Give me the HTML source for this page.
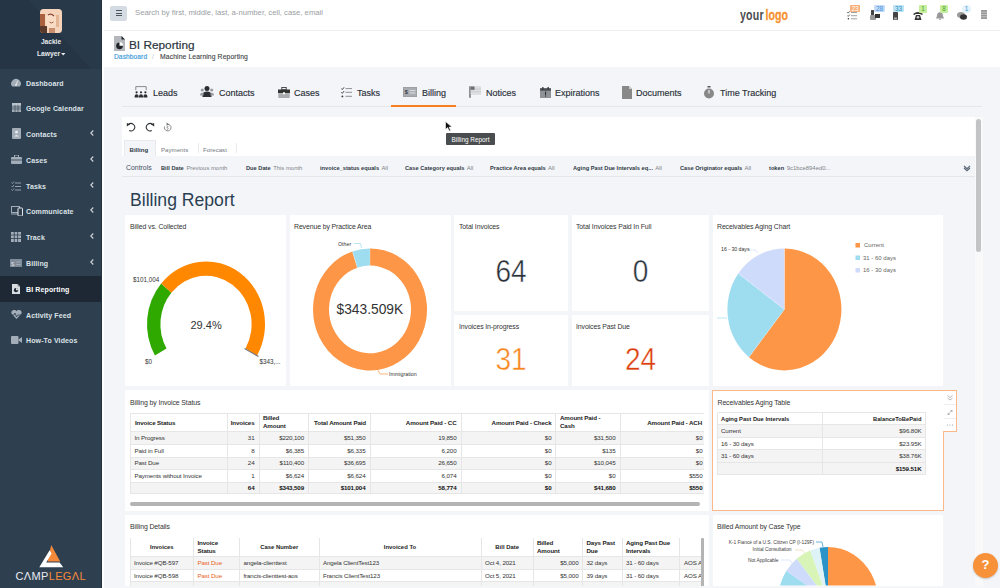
<!DOCTYPE html>
<html><head><meta charset="utf-8">
<style>
*{margin:0;padding:0;box-sizing:border-box}
html,body{width:1000px;height:588px;overflow:hidden;background:#f4f5f9;font-family:"Liberation Sans",sans-serif}
.a{position:absolute}
#sb{left:0;top:0;width:102px;height:588px;background:#2e3f50}
#sbh{left:0;top:0;width:102px;height:69px;background:#253545}
.mi{position:absolute;left:26px;color:#dde2e6;font-size:7px;font-weight:bold;letter-spacing:0.12px;white-space:nowrap;line-height:10px}
.chev{position:absolute;left:89px;color:#c8ced4;font-size:9px;font-weight:bold;line-height:10px}
.tab{position:absolute;top:88px;font-size:9px;color:#2a3038;-webkit-text-stroke:0.15px #2a3038;white-space:nowrap;line-height:11px}
.t{position:absolute;white-space:nowrap;line-height:1.15}
.card{position:absolute;background:#fff}
</style></head><body>
<!-- SIDEBAR -->
<div id="sb" class="a"></div>
<div id="sbh" class="a"></div>
<svg class="a" style="left:0;top:0" width="102" height="69"><path d="M29 0H102V69H91Z" fill="#283949"/></svg>
<div class="a" style="left:0;top:276px;width:102px;height:26px;background:#1d2834"></div>
<div class="a" style="left:102px;top:0;width:2px;height:588px;background:#fff"></div>
<div class="a" style="left:101px;top:0;width:1px;height:588px;background:#24323f"></div>
<!-- avatar -->
<svg class="a" style="left:40px;top:9px" width="22" height="24" viewBox="0 0 22 24"><defs><clipPath id="av"><rect width="22" height="24" rx="3.5"/></clipPath></defs><g clip-path="url(#av)">
<rect width="22" height="24" fill="#f4d3ba"/>
<rect x="0" y="5" width="5" height="19" fill="#a8603f"/>
<rect x="0" y="17" width="7" height="7" fill="#5a3a2c"/>
<ellipse cx="11" cy="12" rx="5.5" ry="8" fill="#f8dcc6"/>
<path d="M8 6 Q11 4 14 7" stroke="#8a4a34" stroke-width="1.3" fill="none"/>
<path d="M9.5 13 Q11.5 15 13.5 13" stroke="#9b5238" stroke-width="0.9" fill="none"/>
<rect x="16" y="6" width="3" height="12" fill="#e3b595"/>
<rect x="9" y="19" width="6" height="5" fill="#c98e6e"/>
</g></svg>
<div class="t" style="left:0;width:102px;text-align:center;top:38.3px;font-size:6.6px;font-weight:bold;color:#e8ebee">Jackie</div>
<div class="t" style="left:37px;top:50.3px;font-size:6.7px;font-weight:bold;color:#e8ebee">Lawyer</div><svg class="a" style="left:61.3px;top:53px" width="4.5" height="2.6" viewBox="0 0 5 3"><path d="M0 0h5L2.5 2.8z" fill="#e8ebee"/></svg>
<!-- menu -->
<div class="mi" style="top:79px">Dashboard</div>
<div class="mi" style="top:104px">Google Calendar</div>
<div class="mi" style="top:130px">Contacts</div>
<div class="mi" style="top:156px">Cases</div>
<div class="mi" style="top:182px">Tasks</div>
<div class="mi" style="top:207px">Communicate</div>
<div class="mi" style="top:233px">Track</div>
<div class="mi" style="top:259px">Billing</div>
<div class="mi" style="top:285px;color:#fff">BI Reporting</div>
<div class="mi" style="top:311px">Activity Feed</div>
<div class="mi" style="top:336px">How-To Videos</div>
<svg class="a" style="left:89.5px;top:130px" width="4" height="6" viewBox="0 0 4 6"><path d="M3.3 0.5L0.8 3l2.5 2.5" fill="none" stroke="#d0d5da" stroke-width="1.1"/></svg>
<svg class="a" style="left:89.5px;top:156px" width="4" height="6" viewBox="0 0 4 6"><path d="M3.3 0.5L0.8 3l2.5 2.5" fill="none" stroke="#d0d5da" stroke-width="1.1"/></svg>
<svg class="a" style="left:89.5px;top:182px" width="4" height="6" viewBox="0 0 4 6"><path d="M3.3 0.5L0.8 3l2.5 2.5" fill="none" stroke="#d0d5da" stroke-width="1.1"/></svg>
<svg class="a" style="left:89.5px;top:207px" width="4" height="6" viewBox="0 0 4 6"><path d="M3.3 0.5L0.8 3l2.5 2.5" fill="none" stroke="#d0d5da" stroke-width="1.1"/></svg>
<svg class="a" style="left:89.5px;top:233px" width="4" height="6" viewBox="0 0 4 6"><path d="M3.3 0.5L0.8 3l2.5 2.5" fill="none" stroke="#d0d5da" stroke-width="1.1"/></svg>
<svg class="a" style="left:89.5px;top:259px" width="4" height="6" viewBox="0 0 4 6"><path d="M3.3 0.5L0.8 3l2.5 2.5" fill="none" stroke="#d0d5da" stroke-width="1.1"/></svg>
<!-- icons -->
<svg class="a" style="left:11px;top:78px" width="10" height="9" viewBox="0 0 10 9"><path d="M1.2 8.5 A4.8 4.6 0 1 1 8.8 8.5 Z" fill="#a3adb7"/><path d="M5 7 L6.8 2.5" stroke="#e6e9ec" stroke-width="0.9"/><circle cx="5" cy="7" r="0.9" fill="#e6e9ec"/></svg>
<svg class="a" style="left:12px;top:102px" width="9" height="10" viewBox="0 0 9 10"><rect x="0" y="1" width="9" height="9" fill="#a3adb7"/><rect x="0" y="1" width="9" height="2" fill="#b9c1c9"/><path d="M0 5h9M0 7h9M3 3v7M6 3v7" stroke="#2e3f50" stroke-width="0.6"/></svg>
<svg class="a" style="left:12px;top:128px" width="9" height="11" viewBox="0 0 9 11"><rect x="0" y="0" width="9" height="11" rx="1" fill="#a3adb7"/><circle cx="4.5" cy="4" r="1.5" fill="#e6e9ec"/><path d="M2 8.5 Q4.5 5.5 7 8.5Z" fill="#e6e9ec"/></svg>
<svg class="a" style="left:11px;top:155px" width="11" height="9" viewBox="0 0 11 9"><rect x="0" y="2" width="11" height="7" rx="1" fill="#a3adb7"/><rect x="3.5" y="0" width="4" height="2.5" fill="none" stroke="#a3adb7" stroke-width="1"/><path d="M0 5h11" stroke="#2e3f50" stroke-width="0.8"/></svg>
<svg class="a" style="left:11px;top:181px" width="10" height="10" viewBox="0 0 10 10"><path d="M0.5 1.5l1 1 1.5-2M0.5 5l1 1 1.5-2M0.5 8.5l1 1 1.5-2" stroke="#a3adb7" stroke-width="0.8" fill="none"/><path d="M4 2h6M4 5.5h6M4 9h6" stroke="#a3adb7" stroke-width="0.9"/></svg>
<svg class="a" style="left:11px;top:206px" width="12" height="10" viewBox="0 0 12 10"><rect x="0.5" y="0.5" width="8" height="6" fill="none" stroke="#a3adb7" stroke-width="1"/><path d="M0 8h7" stroke="#a3adb7" stroke-width="1"/><rect x="7" y="2" width="4.5" height="8" rx="0.8" fill="#2e3f50" stroke="#e6e9ec" stroke-width="1"/></svg>
<svg class="a" style="left:11px;top:232px" width="10" height="10" viewBox="0 0 10 10"><rect x="0" y="0" width="10" height="10" fill="#a3adb7"/><path d="M0 3h10M0 6.5h10M3.3 0v10M6.6 0v10" stroke="#2e3f50" stroke-width="0.8"/></svg>
<svg class="a" style="left:10px;top:259px" width="12" height="8" viewBox="0 0 12 8"><rect x="0" y="0" width="12" height="8" fill="#7e8a97"/><text x="1" y="6.5" font-size="6" fill="#d5dade" font-family="Liberation Sans">$</text><path d="M6 3h5M6 5.5h5" stroke="#aab3bc" stroke-width="0.7"/></svg>
<svg class="a" style="left:12px;top:284px" width="8" height="10" viewBox="0 0 8 10"><path d="M0 0h5.5l2.5 2.5V10H0z" fill="#d9dde1"/><path d="M5.5 0v2.5H8z" fill="#8d959d"/><circle cx="4" cy="6.2" r="2.1" fill="#1d2834"/><path d="M4 6.2V4.1A2.1 2.1 0 0 1 6.1 6.2z" fill="#d9dde1"/></svg>
<svg class="a" style="left:11px;top:310px" width="11" height="9" viewBox="0 0 11 9"><path d="M5.5 9 L0.8 4 A2.6 2.6 0 0 1 5.5 1.3 A2.6 2.6 0 0 1 10.2 4 Z" fill="#a3adb7"/><path d="M0 5h3l1-2 1.5 4 1-2h4.5" stroke="#2e3f50" stroke-width="0.8" fill="none"/></svg>
<svg class="a" style="left:11px;top:336px" width="11" height="8" viewBox="0 0 11 8"><rect x="0" y="0" width="7.5" height="8" rx="1" fill="#a3adb7"/><path d="M7.5 3.5 L11 1 V7 L7.5 4.5Z" fill="#a3adb7"/></svg>
<!-- camplegal logo -->
<svg class="a" style="left:0;top:540px" width="102" height="48" viewBox="0 540 102 48"><path d="M51.2 545 L60.2 561.5 L47.6 561.5 Z" fill="#f58a3a"/><path d="M39.3 567.2 L49.6 550.3 L51.6 553.6 L46.2 562.4 L59.6 562.4 L63.2 567.2 Z" fill="#fff"/></svg>
<div class="t" style="left:15.5px;top:570px;font-size:11px;letter-spacing:0.35px;color:#e9ecef;line-height:12px">C&#923;MP<span style="color:#f58a3a">LEG&#923;L</span></div>
<!-- TOP BAR -->
<div class="a" style="left:104px;top:0;width:896px;height:31px;background:#fff"></div>
<div class="a" style="left:104px;top:30px;width:896px;height:1px;background:#eceef2"></div>
<div class="a" style="left:110px;top:6px;width:17px;height:15px;border-radius:2px;background:#d5dbe2"></div>
<div class="a" style="left:115.5px;top:10px;width:6px;height:1px;background:#4a5560"></div>
<div class="a" style="left:115.5px;top:12.8px;width:6px;height:1px;background:#4a5560"></div>
<div class="a" style="left:115.5px;top:15.2px;width:6px;height:1px;background:#4a5560"></div>
<div class="t" style="left:135px;top:8.5px;font-size:7.7px;color:#9a9ea3">Search by first, middle, last, a-number, cell, case, email</div>
<div class="t" style="left:740px;top:8.6px;font-size:10.6px;font-weight:bold;color:#4b4d50;letter-spacing:0.2px;transform:scaleY(1.33);transform-origin:0 50%;line-height:12px">your</div><div class="t" style="left:765.5px;top:8.6px;font-size:10.6px;font-weight:bold;color:#f7922e;-webkit-text-stroke:0.2px #f7922e;transform:scaleY(1.33);transform-origin:0 50%;line-height:12px">logo</div>
<!-- right icons -->
<svg class="a" style="left:847px;top:11px" width="10" height="9" viewBox="0 0 10 9"><path d="M0.3 1.2l0.9 0.9 1.6-1.8M0.3 4.5l0.9 0.9 1.6-1.8" stroke="#333" stroke-width="0.8" fill="none"/><circle cx="1.4" cy="7.8" r="0.8" fill="#333"/><path d="M4 1.5h6M4 4.7h6M4 7.8h6" stroke="#777" stroke-width="0.7"/></svg>
<div class="a" style="left:850px;top:5px;width:10px;height:7px;background:#fbb07a;border-radius:1px"></div>
<div class="t" style="left:850px;top:4.5px;width:10px;text-align:center;font-size:6.5px;color:#fff">23</div>
<svg class="a" style="left:870px;top:10px" width="11" height="10" viewBox="0 0 11 10"><rect x="1" y="0" width="3" height="5" fill="#444" rx="0.5"/><rect x="0" y="5" width="6" height="5" fill="#999" rx="1"/><rect x="5" y="4" width="5" height="4" fill="#333"/></svg>
<div class="a" style="left:874px;top:5px;width:11px;height:7px;background:#c7dcf8;border-radius:1px"></div>
<div class="t" style="left:874px;top:4.5px;width:11px;text-align:center;font-size:6.5px;color:#3b8fd8">28</div>
<svg class="a" style="left:893px;top:12px" width="5" height="8" viewBox="0 0 5 8"><rect x="0" y="0" width="5" height="8" rx="0.8" fill="#444"/><rect x="1" y="5.5" width="3" height="2" fill="#aaa"/></svg>
<div class="a" style="left:893px;top:5px;width:11px;height:7px;background:#bfe5f5;border-radius:1px"></div>
<div class="t" style="left:893px;top:4.5px;width:11px;text-align:center;font-size:6.5px;color:#2d8fc0">33</div>
<svg class="a" style="left:913px;top:11px" width="10" height="9" viewBox="0 0 10 9"><path d="M0 3 Q5 -1 10 3 L9 4 L7 3 L3 3 L1 4 Z" fill="#333"/><path d="M1.5 9 L3 4 H7 L8.5 9 Z" fill="#333"/><circle cx="5" cy="6.3" r="1.3" fill="#ccc"/></svg>
<div class="a" style="left:919px;top:5px;width:8px;height:8px;background:#c5ef9f;border-radius:1px"></div>
<div class="t" style="left:919px;top:5px;width:8px;text-align:center;font-size:6.5px;color:#4a9b1f">1</div>
<svg class="a" style="left:936px;top:12px" width="8" height="8" viewBox="0 0 8 8"><path d="M4 0 Q7 0.5 7 4 L8 6.5 H0 L1 4 Q1 0.5 4 0Z" fill="#999"/><circle cx="4" cy="7.3" r="0.8" fill="#999"/></svg>
<div class="a" style="left:940px;top:5px;width:8px;height:8px;background:#c5ef9f;border-radius:1px"></div>
<div class="t" style="left:940px;top:5px;width:8px;text-align:center;font-size:6.5px;color:#4a9b1f">8</div>
<svg class="a" style="left:957px;top:12px" width="10" height="8" viewBox="0 0 10 8"><ellipse cx="4" cy="3" rx="4" ry="3" fill="#999"/><ellipse cx="6.5" cy="5" rx="3.5" ry="2.8" fill="#333"/></svg>
<div class="a" style="left:962px;top:5px;width:9px;height:8px;background:#e3f3fb;border-radius:4px"></div>
<div class="t" style="left:962px;top:5px;width:9px;text-align:center;font-size:6.5px;color:#3d95c9">1</div>
<svg class="a" style="left:981px;top:10px" width="6" height="9" viewBox="0 0 6 9"><rect x="0" y="0" width="6" height="9" fill="#999"/><path d="M0 2.2h6M0 4.5h6M0 6.8h6" stroke="#ddd" stroke-width="0.6"/></svg>
<!-- HEADER -->
<div class="a" style="left:104px;top:31px;width:896px;height:36px;background:#fff"></div>
<svg class="a" style="left:114px;top:36px" width="11" height="15" viewBox="0 0 11 15"><path d="M0 0h7.5l3.5 3.5V15H0z" fill="#b4b8bd"/><path d="M7.5 0l3.5 3.5H7.5z" fill="#22262a"/><circle cx="5.5" cy="9.8" r="3.4" fill="#22262a"/><path d="M5.5 9.8V6.1A3.7 3.7 0 0 1 9.2 9.8Z" fill="#fff"/></svg>
<div class="t" style="left:129px;top:38.5px;font-size:11.8px;color:#2b3540;-webkit-text-stroke:0.2px #2b3540">BI Reporting</div>
<div class="t" style="left:114px;top:53px;font-size:6.6px;color:#3a9ad9;letter-spacing:0.1px;-webkit-text-stroke:0.15px #3a9ad9">Dashboard</div>
<div class="t" style="left:152px;top:53px;font-size:7px;color:#c4c8cc">/</div>
<div class="t" style="left:160px;top:53px;font-size:6.8px;color:#3c4043;letter-spacing:0.1px;-webkit-text-stroke:0.1px #3c4043">Machine Learning Reporting</div>
<!-- TAB NAV -->
<div class="a" style="left:122px;top:106px;width:860px;height:1.2px;background:#e6e7ea"></div>
<div class="a" style="left:391px;top:105px;width:65px;height:2px;background:#f7801e"></div>
<svg class="a" style="left:134px;top:86px" width="14" height="12" viewBox="0 0 14 12"><path d="M1.8 4.2V0.6h10.4v3.6" fill="none" stroke="#6a6e72" stroke-width="0.8"/><circle cx="2.6" cy="6.3" r="1.1" fill="#2b2f33"/><circle cx="7" cy="6.3" r="1.1" fill="#2b2f33"/><circle cx="11.4" cy="6.3" r="1.1" fill="#2b2f33"/><path d="M0.6 11.5v-1.3a2 1.9 0 0 1 4 0V11.5zM5 11.5v-1.3a2 1.9 0 0 1 4 0V11.5zM9.4 11.5v-1.3a2 1.9 0 0 1 4 0V11.5z" fill="#2b2f33"/></svg>
<div class="tab" style="left:153px">Leads</div>
<svg class="a" style="left:200px;top:86px" width="14" height="11" viewBox="0 0 14 11"><circle cx="7" cy="2.5" r="2.5" fill="#2b2f33"/><path d="M2.5 11v-2a4.5 3.5 0 0 1 9 0v2z" fill="#2b2f33"/><circle cx="2.3" cy="4" r="1.6" fill="#9a9ea2"/><circle cx="11.7" cy="4" r="1.6" fill="#9a9ea2"/><path d="M0 9a2.3 2.3 0 0 1 3.5-2v2.5H0zM14 9a2.3 2.3 0 0 0 -3.5-2v2.5H14z" fill="#9a9ea2"/></svg>
<div class="tab" style="left:219px">Contacts</div>
<svg class="a" style="left:277.5px;top:87px" width="12" height="11" viewBox="0 0 12 11"><rect x="3.8" y="0.4" width="4.4" height="2.4" fill="none" stroke="#333" stroke-width="0.9"/><path d="M0 2.5h12v3.8H0z" fill="#333"/><path d="M0.3 6.8h11.4V11H0.3z" fill="#a9abae"/><rect x="5" y="5.3" width="2" height="2" fill="#fff"/></svg>
<div class="tab" style="left:294px">Cases</div>
<svg class="a" style="left:341px;top:87px" width="12" height="11" viewBox="0 0 12 11"><path d="M0.3 1.5l1 1 1.8-2.2M0.3 5.3l1 1 1.8-2.2" stroke="#2b2f33" stroke-width="0.9" fill="none"/><circle cx="1.4" cy="9.4" r="0.9" fill="#2b2f33"/><path d="M4.5 1.6h6.5M4.5 5.3h6.5M4.5 9.3h6.5" stroke="#8d9095" stroke-width="1"/></svg>
<div class="tab" style="left:357px">Tasks</div>
<svg class="a" style="left:403px;top:87px" width="14" height="10" viewBox="0 0 14 10"><rect x="0" y="0" width="14" height="10" fill="#9a9ea2"/><rect x="0.8" y="0.8" width="12.4" height="8.4" fill="#a9adb1"/><text x="1.8" y="7.3" font-size="5.5" font-weight="bold" fill="#3a3d40" font-family="Liberation Sans">$</text><path d="M6.5 3.6h5.8M6.5 6h5.8" stroke="#e2e4e6" stroke-width="0.9"/></svg>
<div class="tab" style="left:422px">Billing</div>
<svg class="a" style="left:469px;top:86px" width="13" height="12" viewBox="0 0 13 12"><path d="M1 0.3v11.5" stroke="#3a3d40" stroke-width="1.1"/><path d="M1.6 0.5h10.4v8H1.6z" fill="#c9cbce"/><path d="M1.6 0.5h4v3.3h-4z" fill="#6b6e72"/><path d="M5.6 1.6h6.4M5.6 3h6.4M1.6 4.6h10.4M1.6 6.2h10.4M1.6 7.6h10.4" stroke="#f2f3f5" stroke-width="0.55"/></svg>
<div class="tab" style="left:486px">Notices</div>
<svg class="a" style="left:539.5px;top:86.5px" width="11" height="11" viewBox="0 0 11 11"><rect x="0" y="1.3" width="11" height="9.7" rx="0.6" fill="#8f9296"/><rect x="0" y="1.3" width="11" height="2.4" fill="#4d5054"/><rect x="2.2" y="0" width="1.3" height="2.6" fill="#2f3235"/><rect x="7.5" y="0" width="1.3" height="2.6" fill="#2f3235"/><rect x="5" y="4.6" width="1.1" height="3.2" fill="#2b2d30"/><rect x="5" y="8.5" width="1.1" height="1.1" fill="#2b2d30"/></svg>
<div class="tab" style="left:555px">Expirations</div>
<svg class="a" style="left:622px;top:86px" width="10" height="13" viewBox="0 0 10 13"><path d="M0 0h7l3 3v10H0z" fill="#888"/><path d="M7 0v3h3z" fill="#ccc"/></svg>
<div class="tab" style="left:636px">Documents</div>
<svg class="a" style="left:704px;top:86px" width="10" height="13" viewBox="0 0 10 13"><rect x="3.5" y="0" width="3" height="1.5" fill="#555"/><circle cx="5" cy="7.5" r="5" fill="#888"/><path d="M5 7.5V4" stroke="#fff" stroke-width="1"/></svg>
<div class="tab" style="left:720px">Time Tracking</div>

<!-- PANEL -->
<div class="a" style="left:122px;top:117px;width:852.5px;height:39px;background:#fff"></div>
<svg class="a" style="left:126px;top:122px" width="10" height="10" viewBox="0 0 10 10"><path d="M2.38 2.58 A3.7 3.7 0 1 1 3.3 8.5" fill="none" stroke="#2b2f33" stroke-width="1.05"/><path d="M0.7 4.5 L0.9 0.9 L4.2 2.3 Z" fill="#2b2f33"/></svg>
<svg class="a" style="left:144.5px;top:122px" width="10" height="10" viewBox="0 0 10 10"><path d="M7.62 2.58 A3.7 3.7 0 1 0 6.7 8.5" fill="none" stroke="#2b2f33" stroke-width="1.05"/><path d="M9.3 4.5 L9.1 0.9 L5.8 2.3 Z" fill="#2b2f33"/></svg>
<svg class="a" style="left:163px;top:122px" width="9" height="11" viewBox="0 0 9 11"><path d="M4.7 2.3 A3.3 3.3 0 1 1 1.6 4.5" fill="none" stroke="#6a6e72" stroke-width="0.8"/><path d="M3.6 0.5 L5.8 2.3 L3.6 3.7 Z" fill="#6a6e72"/><path d="M5.4 4.4h-1.3l-0.2 1.3q1.3-0.3 1.4 0.8t-1.5 0.8" fill="none" stroke="#6a6e72" stroke-width="0.6"/></svg>
<div class="a" style="left:124px;top:140px;width:32px;height:16px;background:#f4f5f9;border:1px solid #e8eaee;border-bottom:none"></div>
<div class="t" style="left:129.5px;top:145.5px;font-size:6.1px;font-weight:bold;color:#2f3b47">Billing</div>
<div class="t" style="left:161px;top:145.5px;font-size:6.15px;color:#757a80">Payments</div>
<div class="a" style="left:198px;top:143px;width:1px;height:10px;background:#e8eaee"></div>
<div class="t" style="left:203px;top:145.5px;font-size:6.15px;color:#757a80">Forecast</div>
<div class="a" style="left:236px;top:143px;width:1px;height:10px;background:#e8eaee"></div>
<!-- controls bar -->
<div class="a" style="left:122px;top:156px;width:852.5px;height:21px;background:#f4f5f9;border-bottom:1px solid #e4e6ea"></div>
<div class="t" style="left:126px;top:164px;font-size:6.9px;color:#44505c">Controls</div>
<div class="t" style="left:161px;top:165px;font-size:5.9px;color:#7d8287"><b style="color:#2f3a45;font-size:5.7px;margin-right:1px">Bill Date</b> Previous month</div>
<div class="t" style="left:246px;top:165px;font-size:5.9px;color:#7d8287"><b style="color:#2f3a45;font-size:5.7px;margin-right:1px">Due Date</b> This month</div>
<div class="t" style="left:320px;top:165px;font-size:5.9px;color:#7d8287"><b style="color:#2f3a45;font-size:5.7px;margin-right:1px">invoice_status equals</b> All</div>
<div class="t" style="left:405px;top:165px;font-size:5.9px;color:#7d8287"><b style="color:#2f3a45;font-size:5.7px;margin-right:1px">Case Category equals</b> All</div>
<div class="t" style="left:490px;top:165px;font-size:5.9px;color:#7d8287"><b style="color:#2f3a45;font-size:5.7px;margin-right:1px">Practice Area equals</b> All</div>
<div class="t" style="left:573px;top:165px;font-size:5.9px;color:#7d8287"><b style="color:#2f3a45;font-size:5.7px;margin-right:1px">Aging Past Due Intervals eq...</b> All</div>
<div class="t" style="left:680px;top:165px;font-size:5.9px;color:#7d8287"><b style="color:#2f3a45;font-size:5.7px;margin-right:1px">Case Originator equals</b> All</div>
<div class="t" style="left:769px;top:165px;font-size:5.9px;color:#7d8287"><b style="color:#2f3a45;font-size:5.7px;margin-right:1px">token</b> 9c1bce894ed0...</div>
<svg class="a" style="left:962.5px;top:164.5px" width="8" height="7" viewBox="0 0 8 7"><path d="M1 1l3 2.6 3-2.6M1 3l3 2.6 3-2.6" fill="none" stroke="#5d6b78" stroke-width="1.2"/></svg>
<!-- scrollbar -->
<div class="a" style="left:975px;top:117px;width:7.5px;height:471px;background:#f9f9fa"></div>
<div class="a" style="left:976px;top:119px;width:5px;height:133px;border-radius:3px;background:#c3c4c6"></div>
<div class="a" style="left:982px;top:0;width:1px;height:588px;background:#eceef2;display:none"></div>
<!-- title -->
<div class="t" style="left:130px;top:189.5px;font-size:17.6px;color:#2a3f52">Billing Report</div>
<!-- tooltip -->
<div class="a" style="left:446px;top:133px;width:49px;height:12px;background:#4a4d50;border-radius:1px"></div>
<div class="t" style="left:446px;top:135.7px;width:49px;text-align:center;font-size:6.4px;color:#fff">Billing Report</div>
<svg class="a" style="left:445px;top:121px" width="8" height="11" viewBox="0 0 8 11"><path d="M0.5 0.5 L0.5 8.5 L2.6 6.6 L4.2 10 L5.6 9.4 L4.1 6.1 L7 6.1 Z" fill="#111" stroke="#fff" stroke-width="0.6"/></svg>
<!-- ROW 1 -->
<div class="card" style="left:125px;top:215px;width:161px;height:171px"></div>
<div class="t" style="left:130px;top:223.2px;font-size:6.9px;letter-spacing:-0.1px;color:#333">Billed vs. Collected</div>
<svg class="a" style="left:0;top:0" width="1000" height="588" viewBox="0 0 1000 588">
 <g transform="translate(206 324.2) scale(1 1.063)">
  <path d="M-51.10 29.50A59 59 0 0 1 -44.80 -38.40L-34.62 -29.68A45.6 45.6 0 0 0 -39.49 22.80Z" fill="#2fa900"/>
  <path d="M-44.80 -38.40A59 59 0 0 1 51.10 29.50L39.49 22.80A45.6 45.6 0 0 0 -34.62 -29.68Z" fill="#ff8800"/>
 </g>
 <path d="M244.5 348.6 L258.5 356.6" stroke="#777" stroke-width="1.2"/>
</svg>
<div class="t" style="left:133px;top:275.6px;font-size:6.3px;color:#333">$101,004</div>
<div class="t" style="left:145px;top:358px;font-size:6.3px;color:#333">$0</div>
<div class="t" style="left:259.5px;top:358px;font-size:6.3px;color:#333">$343,...</div>
<div class="t" style="left:190.5px;top:318.5px;font-size:11px;color:#333">29.4%</div>

<div class="card" style="left:290px;top:215px;width:161px;height:171px"></div>
<div class="t" style="left:294px;top:223.2px;font-size:6.9px;letter-spacing:-0.1px;color:#333">Revenue by Practice Area</div>
<svg class="a" style="left:0;top:0" width="1000" height="588" viewBox="0 0 1000 588">
 <g transform="translate(370 309.4) scale(1 1.07)">
  <path d="M0.00 -57.00A57 57 0 1 1 -17.61 -54.21L-12.67 -38.99A41 41 0 1 0 0.00 -41.00Z" fill="#fd9646"/>
  <path d="M-17.61 -54.21A57 57 0 0 1 0.00 -57.00L0.00 -41.00A41 41 0 0 0 -12.67 -38.99Z" fill="#9edcf0"/>
  <path d="M0 -57L0 -41M-17.61 -54.21L-12.67 -38.99" fill="none" stroke="#fff" stroke-width="0.5" stroke-dasharray="0.8 0.7" opacity="0.9"/>
 </g>
 <path d="M354 243.5 H360.5 L361.5 248" fill="none" stroke="#9edcf0" stroke-width="0.7"/>
 <path d="M377.5 369.5 L380 374 H388" fill="none" stroke="#fd9646" stroke-width="0.7"/>
</svg>
<div class="t" style="left:338px;top:240.5px;font-size:5.3px;color:#333">Other</div>
<div class="t" style="left:389px;top:371px;font-size:5.3px;color:#333">Immigration</div>
<div class="t" style="left:336.5px;top:302px;font-size:13.8px;color:#333">$343.509K</div>

<div class="card" style="left:454px;top:215px;width:114px;height:96px"></div>
<div class="t" style="left:459px;top:223.2px;font-size:6.9px;letter-spacing:-0.1px;color:#333">Total Invoices</div>
<div class="t" style="left:454px;width:114px;text-align:center;top:255.5px;font-size:28px;color:#2a3139;transform:scaleY(1.1);-webkit-text-stroke:0.4px #fff">64</div>
<div class="card" style="left:572px;top:215px;width:137px;height:96px"></div>
<div class="t" style="left:576px;top:223.2px;font-size:6.9px;letter-spacing:-0.1px;color:#333">Total Invoices Paid In Full</div>
<div class="t" style="left:572px;width:137px;text-align:center;top:255.5px;font-size:28px;color:#2a3139;transform:scaleY(1.1);-webkit-text-stroke:0.4px #fff">0</div>
<div class="card" style="left:454px;top:315px;width:114px;height:71px"></div>
<div class="t" style="left:459px;top:323.2px;font-size:6.9px;letter-spacing:-0.1px;color:#333">Invoices In-progress</div>
<div class="t" style="left:454px;width:114px;text-align:center;top:343.5px;font-size:28px;color:#f7851d;transform:scaleY(1.1);-webkit-text-stroke:0.4px #fff">31</div>
<div class="card" style="left:572px;top:315px;width:137px;height:71px"></div>
<div class="t" style="left:576px;top:323.2px;font-size:6.9px;letter-spacing:-0.1px;color:#333">Invoices Past Due</div>
<div class="t" style="left:572px;width:137px;text-align:center;top:343.5px;font-size:28px;color:#dc3d0c;transform:scaleY(1.1);-webkit-text-stroke:0.4px #fff">24</div>

<div class="card" style="left:713px;top:215px;width:230px;height:171px"></div>
<div class="t" style="left:717px;top:223.2px;font-size:6.9px;letter-spacing:-0.1px;color:#333">Receivables Aging Chart</div>
<svg class="a" style="left:0;top:0" width="1000" height="588" viewBox="0 0 1000 588">
 <g transform="translate(784.4 309.4) scale(1 1.07)">
  <path d="M0 0L0.00 -57.00A57 57 0 1 1 -35.48 44.61Z" fill="#fd9646"/>
  <path d="M0 0L-35.48 44.61A57 57 0 0 1 -46.11 -33.50Z" fill="#9edcf0"/>
  <path d="M0 0L-46.11 -33.50A57 57 0 0 1 -0.00 -57.00Z" fill="#cfdbfb"/>
  <path d="M0 -57L0 0L-35.48 44.61M0 0L-46.11 -33.50" fill="none" stroke="#fff" stroke-width="0.5" stroke-dasharray="0.8 0.7" opacity="0.9"/>
 </g>
 <path d="M748 250 H755.5 L757.5 253" fill="none" stroke="#cfdbfb" stroke-width="0.7"/>
 <path d="M717 318 H727" fill="none" stroke="#9edcf0" stroke-width="0.7"/>
 <rect x="855.5" y="243" width="4.5" height="4.5" fill="#fd9646"/>
 <rect x="855.5" y="255.5" width="4.5" height="4.5" fill="#9edcf0"/>
 <rect x="855.5" y="268" width="4.5" height="4.5" fill="#cfdbfb"/>
</svg>
<div class="t" style="left:721px;top:247px;font-size:5.2px;color:#333">16 - 30 days</div>
<div class="t" style="left:864px;top:242px;font-size:6px;color:#666">Current</div>
<div class="t" style="left:863px;top:254.5px;font-size:6px;color:#666">31 - 60 days</div>
<div class="t" style="left:863px;top:267px;font-size:6px;color:#666">16 - 30 days</div>
<div class="a" style="left:125px;top:390px;width:584px;height:121px;background:#fff;"></div>
<div class="t" style="top:398.6px;font-size:6.9px;color:#333;left:130px;letter-spacing:-0.1px">Billing by Invoice Status</div>
<div class="a" style="left:130px;top:413px;width:574px;height:82px;overflow:hidden">
<div class="a" style="left:0.0px;top:0.0px;width:700.0px;height:18.4px;background:#fff;"></div>
<div class="a" style="left:0.0px;top:18.4px;width:700.0px;height:13.0px;background:#f4f4f4;"></div>
<div class="a" style="left:0.0px;top:31.4px;width:700.0px;height:12.4px;background:#fff;"></div>
<div class="a" style="left:0.0px;top:43.8px;width:700.0px;height:12.4px;background:#f4f4f4;"></div>
<div class="a" style="left:0.0px;top:56.2px;width:700.0px;height:12.4px;background:#fff;"></div>
<div class="a" style="left:0.0px;top:68.6px;width:700.0px;height:12.4px;background:#f4f4f4;"></div>
<div class="a" style="left:0.0px;top:18.4px;width:700.0px;height:0.8px;background:#e6e6e6;"></div>
<div class="a" style="left:0.0px;top:31.4px;width:700.0px;height:0.8px;background:#e6e6e6;"></div>
<div class="a" style="left:0.0px;top:43.8px;width:700.0px;height:0.8px;background:#e6e6e6;"></div>
<div class="a" style="left:0.0px;top:56.2px;width:700.0px;height:0.8px;background:#e6e6e6;"></div>
<div class="a" style="left:0.0px;top:68.6px;width:700.0px;height:0.8px;background:#e6e6e6;"></div>
<div class="a" style="left:0.0px;top:0.0px;width:700.0px;height:0.8px;background:#e6e6e6;"></div>
<div class="a" style="left:0.0px;top:80.2px;width:700.0px;height:0.8px;background:#e6e6e6;"></div>
<div class="a" style="left:0.0px;top:0.0px;width:0.8px;height:81.0px;background:#e6e6e6;"></div>
<div class="a" style="left:97.0px;top:0.0px;width:0.8px;height:81.0px;background:#e6e6e6;"></div>
<div class="a" style="left:129.4px;top:0.0px;width:0.8px;height:81.0px;background:#e6e6e6;"></div>
<div class="a" style="left:178.4px;top:0.0px;width:0.8px;height:81.0px;background:#e6e6e6;"></div>
<div class="a" style="left:240.0px;top:0.0px;width:0.8px;height:81.0px;background:#e6e6e6;"></div>
<div class="a" style="left:330.6px;top:0.0px;width:0.8px;height:81.0px;background:#e6e6e6;"></div>
<div class="a" style="left:425.4px;top:0.0px;width:0.8px;height:81.0px;background:#e6e6e6;"></div>
<div class="a" style="left:489.5px;top:0.0px;width:0.8px;height:81.0px;background:#e6e6e6;"></div>
<div class="a" style="left:630.0px;top:0.0px;width:0.8px;height:81.0px;background:#e6e6e6;"></div>
<div class="t" style="top:6.2px;font-size:6.2px;color:#222;letter-spacing:-0.12px;font-weight:700;left:5.0px;">Invoice Status</div>
<div class="t" style="top:6.2px;font-size:6.2px;color:#222;letter-spacing:-0.12px;font-weight:700;left:-25.5px;width:150px;text-align:right;">Invoices</div>
<div class="t" style="top:1.2px;font-size:6.2px;color:#222;letter-spacing:-0.12px;font-weight:700;left:133.0px;line-height:8px;">Billed<br>Amount</div>
<div class="t" style="top:6.2px;font-size:6.2px;color:#222;letter-spacing:-0.12px;font-weight:700;left:86.0px;width:150px;text-align:right;">Total Amount Paid</div>
<div class="t" style="top:6.2px;font-size:6.2px;color:#222;letter-spacing:-0.12px;font-weight:700;left:176.5px;width:150px;text-align:right;">Amount Paid - CC</div>
<div class="t" style="top:6.2px;font-size:6.2px;color:#222;letter-spacing:-0.12px;font-weight:700;left:271.5px;width:150px;text-align:right;">Amount Paid - Check</div>
<div class="t" style="top:1.2px;font-size:6.2px;color:#222;letter-spacing:-0.12px;font-weight:700;left:430.0px;line-height:8px;">Amount Paid -<br>Cash</div>
<div class="t" style="top:6.2px;font-size:6.2px;color:#222;letter-spacing:-0.12px;font-weight:700;left:422.0px;width:150px;text-align:right;">Amount Paid - ACH</div>
<div class="t" style="top:20.9px;font-size:6.2px;color:#333;letter-spacing:-0.12px;left:4.5px;">In Progress</div>
<div class="t" style="top:20.9px;font-size:6.2px;color:#333;letter-spacing:-0.12px;left:-25.5px;width:150px;text-align:right;">31</div>
<div class="t" style="top:20.9px;font-size:6.2px;color:#333;letter-spacing:-0.12px;left:24.0px;width:150px;text-align:right;">$220,100</div>
<div class="t" style="top:20.9px;font-size:6.2px;color:#333;letter-spacing:-0.12px;left:85.5px;width:150px;text-align:right;">$51,350</div>
<div class="t" style="top:20.9px;font-size:6.2px;color:#333;letter-spacing:-0.12px;left:176.5px;width:150px;text-align:right;">19,850</div>
<div class="t" style="top:20.9px;font-size:6.2px;color:#333;letter-spacing:-0.12px;left:271.5px;width:150px;text-align:right;">$0</div>
<div class="t" style="top:20.9px;font-size:6.2px;color:#333;letter-spacing:-0.12px;left:335.5px;width:150px;text-align:right;">$31,500</div>
<div class="t" style="top:20.9px;font-size:6.2px;color:#333;letter-spacing:-0.12px;left:422.5px;width:150px;text-align:right;">$0</div>
<div class="t" style="top:33.9px;font-size:6.2px;color:#333;letter-spacing:-0.12px;left:4.5px;">Paid in Full</div>
<div class="t" style="top:33.9px;font-size:6.2px;color:#333;letter-spacing:-0.12px;left:-25.5px;width:150px;text-align:right;">8</div>
<div class="t" style="top:33.9px;font-size:6.2px;color:#333;letter-spacing:-0.12px;left:24.0px;width:150px;text-align:right;">$6,385</div>
<div class="t" style="top:33.9px;font-size:6.2px;color:#333;letter-spacing:-0.12px;left:85.5px;width:150px;text-align:right;">$6,335</div>
<div class="t" style="top:33.9px;font-size:6.2px;color:#333;letter-spacing:-0.12px;left:176.5px;width:150px;text-align:right;">6,200</div>
<div class="t" style="top:33.9px;font-size:6.2px;color:#333;letter-spacing:-0.12px;left:271.5px;width:150px;text-align:right;">$0</div>
<div class="t" style="top:33.9px;font-size:6.2px;color:#333;letter-spacing:-0.12px;left:335.5px;width:150px;text-align:right;">$135</div>
<div class="t" style="top:33.9px;font-size:6.2px;color:#333;letter-spacing:-0.12px;left:422.5px;width:150px;text-align:right;">$0</div>
<div class="t" style="top:46.3px;font-size:6.2px;color:#333;letter-spacing:-0.12px;left:4.5px;">Past Due</div>
<div class="t" style="top:46.3px;font-size:6.2px;color:#333;letter-spacing:-0.12px;left:-25.5px;width:150px;text-align:right;">24</div>
<div class="t" style="top:46.3px;font-size:6.2px;color:#333;letter-spacing:-0.12px;left:24.0px;width:150px;text-align:right;">$110,400</div>
<div class="t" style="top:46.3px;font-size:6.2px;color:#333;letter-spacing:-0.12px;left:85.5px;width:150px;text-align:right;">$36,695</div>
<div class="t" style="top:46.3px;font-size:6.2px;color:#333;letter-spacing:-0.12px;left:176.5px;width:150px;text-align:right;">26,650</div>
<div class="t" style="top:46.3px;font-size:6.2px;color:#333;letter-spacing:-0.12px;left:271.5px;width:150px;text-align:right;">$0</div>
<div class="t" style="top:46.3px;font-size:6.2px;color:#333;letter-spacing:-0.12px;left:335.5px;width:150px;text-align:right;">$10,045</div>
<div class="t" style="top:46.3px;font-size:6.2px;color:#333;letter-spacing:-0.12px;left:422.5px;width:150px;text-align:right;">$0</div>
<div class="t" style="top:58.7px;font-size:6.2px;color:#333;letter-spacing:-0.12px;left:4.5px;">Payments without Invoice</div>
<div class="t" style="top:58.7px;font-size:6.2px;color:#333;letter-spacing:-0.12px;left:-25.5px;width:150px;text-align:right;">1</div>
<div class="t" style="top:58.7px;font-size:6.2px;color:#333;letter-spacing:-0.12px;left:24.0px;width:150px;text-align:right;">$6,624</div>
<div class="t" style="top:58.7px;font-size:6.2px;color:#333;letter-spacing:-0.12px;left:85.5px;width:150px;text-align:right;">$6,624</div>
<div class="t" style="top:58.7px;font-size:6.2px;color:#333;letter-spacing:-0.12px;left:176.5px;width:150px;text-align:right;">6,074</div>
<div class="t" style="top:58.7px;font-size:6.2px;color:#333;letter-spacing:-0.12px;left:271.5px;width:150px;text-align:right;">$0</div>
<div class="t" style="top:58.7px;font-size:6.2px;color:#333;letter-spacing:-0.12px;left:335.5px;width:150px;text-align:right;">$0</div>
<div class="t" style="top:58.7px;font-size:6.2px;color:#333;letter-spacing:-0.12px;left:422.5px;width:150px;text-align:right;">$550</div>
<div class="t" style="top:71.1px;font-size:6.2px;color:#111;letter-spacing:-0.12px;font-weight:700;left:-25.5px;width:150px;text-align:right;">64</div>
<div class="t" style="top:71.1px;font-size:6.2px;color:#111;letter-spacing:-0.12px;font-weight:700;left:24.0px;width:150px;text-align:right;">$343,509</div>
<div class="t" style="top:71.1px;font-size:6.2px;color:#111;letter-spacing:-0.12px;font-weight:700;left:85.5px;width:150px;text-align:right;">$101,004</div>
<div class="t" style="top:71.1px;font-size:6.2px;color:#111;letter-spacing:-0.12px;font-weight:700;left:176.5px;width:150px;text-align:right;">58,774</div>
<div class="t" style="top:71.1px;font-size:6.2px;color:#111;letter-spacing:-0.12px;font-weight:700;left:271.5px;width:150px;text-align:right;">$0</div>
<div class="t" style="top:71.1px;font-size:6.2px;color:#111;letter-spacing:-0.12px;font-weight:700;left:335.5px;width:150px;text-align:right;">$41,680</div>
<div class="t" style="top:71.1px;font-size:6.2px;color:#111;letter-spacing:-0.12px;font-weight:700;left:422.5px;width:150px;text-align:right;">$550</div>
</div>
<div class="a" style="left:130px;top:502px;width:570px;height:4px;background:#b4b4b4;border-radius:2px"></div>
<div class="a" style="left:712px;top:390px;width:232px;height:121px;background:#fff;border:1px solid #fbb888"></div>
<div class="t" style="top:398.6px;font-size:6.9px;color:#333;left:717.5px;letter-spacing:-0.1px">Receivables Aging Table</div>
<div class="a" style="left:943px;top:390px;width:14px;height:42px;background:#fff;border:1px solid #fbb888;border-left:none"></div>
<div class="a" style="left:944px;top:403.5px;width:12px;height:0.8px;background:#eee;"></div>
<div class="a" style="left:944px;top:417.5px;width:12px;height:0.8px;background:#eee;"></div>
<svg class="a" style="left:946px;top:394px" width="8" height="35" viewBox="0 0 8 35"><path d="M1.5 1.5l2.5 2 2.5-2M1.5 4l2.5 2 2.5-2" fill="none" stroke="#999" stroke-width="0.7"/><path d="M2 20.5l4-4M4.5 16.5h1.5v1.5M2 19v1.5h1.5" fill="none" stroke="#999" stroke-width="0.7"/><circle cx="1.5" cy="31" r="0.6" fill="#999"/><circle cx="4" cy="31" r="0.6" fill="#999"/><circle cx="6.5" cy="31" r="0.6" fill="#999"/></svg>
<div class="a" style="left:717.5px;top:412.8px;width:208px;height:11.699999999999989px;background:#fff;"></div>
<div class="a" style="left:717.5px;top:424.5px;width:208px;height:12.5px;background:#f4f4f4;"></div>
<div class="a" style="left:717.5px;top:437px;width:208px;height:12.5px;background:#fff;"></div>
<div class="a" style="left:717.5px;top:449.5px;width:208px;height:12.699999999999989px;background:#f4f4f4;"></div>
<div class="a" style="left:717.5px;top:462.2px;width:208px;height:12.5px;background:#f4f4f4;"></div>
<div class="a" style="left:717.5px;top:412.40000000000003px;width:208px;height:0.8px;background:#e6e6e6;"></div>
<div class="a" style="left:717.5px;top:424.1px;width:208px;height:0.8px;background:#e6e6e6;"></div>
<div class="a" style="left:717.5px;top:436.6px;width:208px;height:0.8px;background:#e6e6e6;"></div>
<div class="a" style="left:717.5px;top:449.1px;width:208px;height:0.8px;background:#e6e6e6;"></div>
<div class="a" style="left:717.5px;top:461.8px;width:208px;height:0.8px;background:#e6e6e6;"></div>
<div class="a" style="left:717.5px;top:474.3px;width:208px;height:0.8px;background:#e6e6e6;"></div>
<div class="a" style="left:717.1px;top:412.8px;width:0.8px;height:61.89999999999998px;background:#e6e6e6;"></div>
<div class="a" style="left:822.1px;top:412.8px;width:0.8px;height:61.89999999999998px;background:#e6e6e6;"></div>
<div class="a" style="left:925.1px;top:412.8px;width:0.8px;height:61.89999999999998px;background:#e6e6e6;"></div>
<div class="t" style="top:415.5px;font-size:5.8px;color:#222;font-weight:700;left:721px;">Aging Past Due Intervals</div>
<div class="t" style="top:415.5px;font-size:5.8px;color:#222;font-weight:700;right:78.5px;text-align:right;">BalanceToBePaid</div>
<div class="t" style="top:427.0px;font-size:6.2px;color:#333;left:721px;letter-spacing:-0.12px">Current</div>
<div class="t" style="top:427.0px;font-size:6.2px;color:#333;right:78.5px;text-align:right;letter-spacing:-0.12px">$96.80K</div>
<div class="t" style="top:439.5px;font-size:6.2px;color:#333;left:721px;letter-spacing:-0.12px">16 - 30 days</div>
<div class="t" style="top:439.5px;font-size:6.2px;color:#333;right:78.5px;text-align:right;letter-spacing:-0.12px">$23.95K</div>
<div class="t" style="top:452.0px;font-size:6.2px;color:#333;left:721px;letter-spacing:-0.12px">31 - 60 days</div>
<div class="t" style="top:452.0px;font-size:6.2px;color:#333;right:78.5px;text-align:right;letter-spacing:-0.12px">$38.76K</div>
<div class="t" style="top:464.7px;font-size:6.2px;color:#111;font-weight:700;right:78.5px;text-align:right;letter-spacing:-0.12px">$159.51K</div>
<div class="a" style="left:125px;top:515px;width:584px;height:73px;background:#fff;"></div>
<div class="t" style="top:523.2px;font-size:6.9px;color:#333;left:130px;letter-spacing:-0.1px">Billing Details</div>
<div class="a" style="left:130px;top:537.6px;width:571px;height:50.4px;overflow:hidden">
<div class="a" style="left:0.0px;top:0.0px;width:700.0px;height:18.4px;background:#fff;"></div>
<div class="a" style="left:0.0px;top:18.4px;width:700.0px;height:13.2px;background:#f4f4f4;"></div>
<div class="a" style="left:0.0px;top:31.6px;width:700.0px;height:11.8px;background:#fff;"></div>
<div class="a" style="left:0.0px;top:43.4px;width:700.0px;height:12.0px;background:#f4f4f4;"></div>
<div class="a" style="left:0.0px;top:-0.4px;width:700.0px;height:0.8px;background:#e6e6e6;"></div>
<div class="a" style="left:0.0px;top:18.0px;width:700.0px;height:0.8px;background:#e6e6e6;"></div>
<div class="a" style="left:0.0px;top:31.2px;width:700.0px;height:0.8px;background:#e6e6e6;"></div>
<div class="a" style="left:0.0px;top:43.0px;width:700.0px;height:0.8px;background:#e6e6e6;"></div>
<div class="a" style="left:0.0px;top:55.0px;width:700.0px;height:0.8px;background:#e6e6e6;"></div>
<div class="a" style="left:-0.4px;top:0.0px;width:0.8px;height:55.4px;background:#e6e6e6;"></div>
<div class="a" style="left:63.3px;top:0.0px;width:0.8px;height:55.4px;background:#e6e6e6;"></div>
<div class="a" style="left:109.1px;top:0.0px;width:0.8px;height:55.4px;background:#e6e6e6;"></div>
<div class="a" style="left:188.6px;top:0.0px;width:0.8px;height:55.4px;background:#e6e6e6;"></div>
<div class="a" style="left:350.6px;top:0.0px;width:0.8px;height:55.4px;background:#e6e6e6;"></div>
<div class="a" style="left:402.9px;top:0.0px;width:0.8px;height:55.4px;background:#e6e6e6;"></div>
<div class="a" style="left:452.3px;top:0.0px;width:0.8px;height:55.4px;background:#e6e6e6;"></div>
<div class="a" style="left:491.9px;top:0.0px;width:0.8px;height:55.4px;background:#e6e6e6;"></div>
<div class="a" style="left:549.3px;top:0.0px;width:0.8px;height:55.4px;background:#e6e6e6;"></div>
<div class="a" style="left:629.6px;top:0.0px;width:0.8px;height:55.4px;background:#e6e6e6;"></div>
<div class="t" style="top:6.9px;left:0.0px;width:63.7px;text-align:center;font-size:5.9px;color:#222;font-weight:700;">Invoices</div>
<div class="t" style="top:1.5px;font-size:6.2px;color:#222;letter-spacing:-0.12px;font-weight:700;left:67.5px;line-height:8px;">Invoice<br>Status</div>
<div class="t" style="top:6.9px;left:109.5px;width:79.5px;text-align:center;font-size:5.9px;color:#222;font-weight:700;">Case Number</div>
<div class="t" style="top:6.9px;left:189.0px;width:162.0px;text-align:center;font-size:5.9px;color:#222;font-weight:700;">Invoiced To</div>
<div class="t" style="top:6.9px;left:351.0px;width:52.3px;text-align:center;font-size:5.9px;color:#222;font-weight:700;">Bill Date</div>
<div class="t" style="top:1.5px;font-size:6.2px;color:#222;letter-spacing:-0.12px;font-weight:700;left:407.0px;line-height:8px;">Billed<br>Amount</div>
<div class="t" style="top:1.5px;font-size:6.2px;color:#222;letter-spacing:-0.12px;font-weight:700;left:456.5px;line-height:8px;">Days Past<br>Due</div>
<div class="t" style="top:1.5px;font-size:6.2px;color:#222;letter-spacing:-0.12px;font-weight:700;left:496.0px;line-height:8px;">Aging Past Due<br>Intervals</div>
<div class="t" style="top:21.6px;font-size:6.2px;color:#333;letter-spacing:-0.12px;left:4.0px;">Invoice #QB-597</div>
<div class="t" style="top:21.6px;font-size:6.2px;color:#e8621c;letter-spacing:-0.12px;left:67.5px;">Past Due</div>
<div class="t" style="top:21.6px;font-size:6.2px;color:#333;letter-spacing:-0.12px;left:113.5px;">angela-clienttest</div>
<div class="t" style="top:21.6px;font-size:6.2px;color:#333;letter-spacing:-0.12px;left:193.0px;">Angela ClientTest123</div>
<div class="t" style="top:21.6px;font-size:6.2px;color:#333;letter-spacing:-0.12px;left:355.0px;">Oct 4, 2021</div>
<div class="t" style="top:21.6px;font-size:6.2px;color:#333;letter-spacing:-0.12px;left:298.5px;width:150px;text-align:right;">$5,000</div>
<div class="t" style="top:21.6px;font-size:6.2px;color:#333;letter-spacing:-0.12px;left:456.5px;">32 days</div>
<div class="t" style="top:21.6px;font-size:6.2px;color:#333;letter-spacing:-0.12px;left:496.0px;">31 - 60 days</div>
<div class="t" style="top:21.6px;font-size:6.2px;color:#333;letter-spacing:-0.12px;left:554.0px;">AOS Ad</div>
<div class="t" style="top:34.8px;font-size:6.2px;color:#333;letter-spacing:-0.12px;left:4.0px;">Invoice #QB-598</div>
<div class="t" style="top:34.8px;font-size:6.2px;color:#e8621c;letter-spacing:-0.12px;left:67.5px;">Past Due</div>
<div class="t" style="top:34.8px;font-size:6.2px;color:#333;letter-spacing:-0.12px;left:113.5px;">francis-clienttest-aos</div>
<div class="t" style="top:34.8px;font-size:6.2px;color:#333;letter-spacing:-0.12px;left:193.0px;">Francis ClientTest123</div>
<div class="t" style="top:34.8px;font-size:6.2px;color:#333;letter-spacing:-0.12px;left:355.0px;">Oct 5, 2021</div>
<div class="t" style="top:34.8px;font-size:6.2px;color:#333;letter-spacing:-0.12px;left:298.5px;width:150px;text-align:right;">$5,000</div>
<div class="t" style="top:34.8px;font-size:6.2px;color:#333;letter-spacing:-0.12px;left:456.5px;">39 days</div>
<div class="t" style="top:34.8px;font-size:6.2px;color:#333;letter-spacing:-0.12px;left:496.0px;">31 - 60 days</div>
<div class="t" style="top:34.8px;font-size:6.2px;color:#333;letter-spacing:-0.12px;left:554.0px;">AOS Ad</div>
<div class="t" style="top:46.6px;font-size:6.2px;color:#333;letter-spacing:-0.12px;left:4.0px;">Invoice #QB-599</div>
<div class="t" style="top:46.6px;font-size:6.2px;color:#e8621c;letter-spacing:-0.12px;left:67.5px;">Past Due</div>
<div class="t" style="top:46.6px;font-size:6.2px;color:#333;letter-spacing:-0.12px;left:113.5px;">francis-clienttest</div>
<div class="t" style="top:46.6px;font-size:6.2px;color:#333;letter-spacing:-0.12px;left:193.0px;">Francis ClientTest123</div>
<div class="t" style="top:46.6px;font-size:6.2px;color:#333;letter-spacing:-0.12px;left:355.0px;">Oct 5, 2021</div>
<div class="t" style="top:46.6px;font-size:6.2px;color:#333;letter-spacing:-0.12px;left:298.5px;width:150px;text-align:right;">$5,000</div>
<div class="t" style="top:46.6px;font-size:6.2px;color:#333;letter-spacing:-0.12px;left:456.5px;">39 days</div>
<div class="t" style="top:46.6px;font-size:6.2px;color:#333;letter-spacing:-0.12px;left:496.0px;">31 - 60 days</div>
<div class="t" style="top:46.6px;font-size:6.2px;color:#333;letter-spacing:-0.12px;left:554.0px;">AOS Ad</div>
</div>
<div class="a" style="left:701px;top:538px;width:3px;height:50px;background:#b4b4b4;border-radius:1px"></div>
<div class="a" style="left:713px;top:515px;width:230px;height:73px;background:#fff;"></div>
<div class="t" style="top:523.2px;font-size:6.9px;color:#333;left:717px;letter-spacing:-0.1px">Billed Amount by Case Type</div>
<svg class="a" style="left:0;top:0" width="1000" height="588" viewBox="0 0 1000 588">
 <clipPath id="ch"><rect x="713" y="515" width="230" height="70.5"/></clipPath>
 <g clip-path="url(#ch)"><g transform="translate(828 600.5) scale(1 1.07)">
  <path d="M0 0L0.00 -50.00A50 50 0 0 1 43.30 25.00Z" fill="#fd9646"/>
  <path d="M0 0L-8.51 -49.27A50 50 0 0 1 0.00 -50.00Z" fill="#2a93c8"/>
  <path d="M0 0L-17.92 -46.68A50 50 0 0 1 -8.51 -49.27Z" fill="#def3f8"/>
  <path d="M0 0L-31.33 -38.97A50 50 0 0 1 -17.92 -46.68Z" fill="#d8f4b6"/>
  <path d="M0 0L-41.69 -27.60A50 50 0 0 1 -31.33 -38.97Z" fill="#cfdbfb"/>
  <path d="M0 0L-49.24 8.68A50 50 0 0 1 -41.69 -27.60Z" fill="#9edcf0"/>
 </g></g>
 <path d="M816 542 H822 L823 547" fill="none" stroke="#2a93c8" stroke-width="0.7"/>
 <path d="M795 550 H802 L805 553" fill="none" stroke="#e9d9b0" stroke-width="0.7"/>
 <path d="M781 560 H790 L792 563" fill="none" stroke="#cfdbfb" stroke-width="0.7"/>
</svg>
<div class="t" style="top:539.5px;font-size:4.9px;color:#444;right:186px;text-align:right;letter-spacing:-0.05px">K-1 Fiancé of a U.S. Citizen CP (I-129F)</div>
<div class="t" style="top:547px;font-size:4.9px;color:#444;right:208.5px;text-align:right;letter-spacing:-0.05px">Initial Consultation</div>
<div class="t" style="top:557.5px;font-size:4.9px;color:#444;right:221.5px;text-align:right;letter-spacing:-0.05px">Not Applicable</div>
<div class="a" style="left:104px;top:585.5px;width:896px;height:3px;background:#f5f6f9;"></div>
<div class="a" style="left:973px;top:553px;width:25px;height:25px;border-radius:50%;background:#f7923a;box-shadow:0 1px 2px rgba(0,0,0,0.2)"></div>
<div class="t" style="top:558px;font-size:13px;color:#fff;font-weight:700;left:973px;width:25px;text-align:center;">?</div></body></html>
